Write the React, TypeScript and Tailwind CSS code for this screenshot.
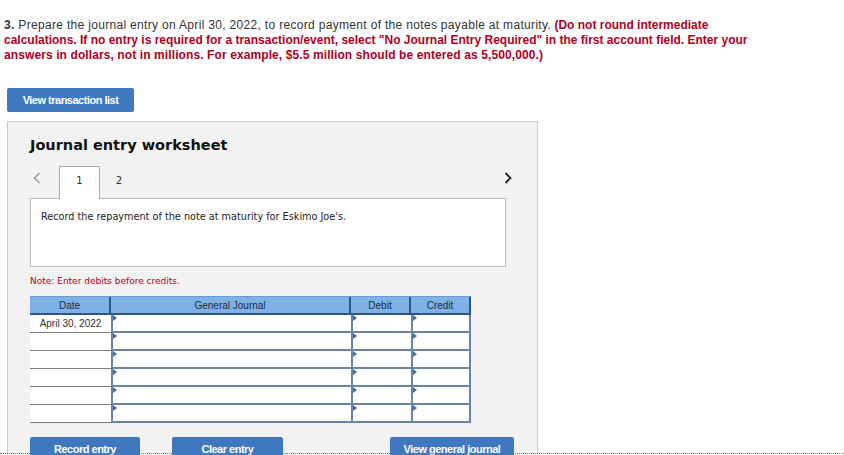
import React from 'react';

const rows = [0, 1, 2, 3, 4, 5];

const Marker: React.FC = () => (
    <span className="absolute left-0 top-0 h-0 w-0 border-y-[3px] border-l-[4px] border-y-transparent border-l-[#3d6eb5]" />
);

const Chevron: React.FC<{ dir: 'left' | 'right'; color: string }> = ({ dir, color }) => (
    <svg width="8" height="12" viewBox="0 0 8 12" fill="none">
        <path
            d={dir === 'left' ? 'M6.5 1 L1.5 6 L6.5 11' : 'M1.5 1 L6.5 6 L1.5 11'}
            stroke={color}
            strokeWidth={dir === 'left' ? 1.4 : 1.8}
        />
    </svg>
);

const App: React.FC = () => {
    return (
        <div className="relative h-[455px] w-[844px] overflow-hidden bg-white">
            <div className="whitespace-nowrap pl-[4px] pt-[18px] text-[12px] leading-[15px] text-[#333] [font-family:'Liberation_Sans',Arial,sans-serif]">
                <div>
                    <span className="tracking-[0.32px]">
                        <span className="font-bold">3.</span> Prepare the journal entry on April 30, 2022, to record payment of the notes payable at maturity.
                    </span>{' '}
                    <span className="font-bold text-[#b0001e]">(Do not round intermediate</span>
                </div>
                <div className="font-bold text-[#b0001e]">
                    calculations. If no entry is required for a transaction/event, select "No Journal Entry Required" in the first account field. Enter your
                </div>
                <div className="font-bold tracking-[0.1px] text-[#b0001e]">
                    answers in dollars, not in millions. For example, $5.5 million should be entered as 5,500,000.)
                </div>
            </div>

            <button className="ml-[7px] mt-[25px] h-[24px] w-[127px] rounded-[2px] bg-[#4078c0] text-[11px] font-bold tracking-[-0.5px] text-white [font-family:'Liberation_Sans',Arial,sans-serif]">
                View transaction list
            </button>

            <div className="ml-[7px] mt-[9px] h-[400px] w-[531px] border border-[#cccccc] bg-[#f2f2f2] pl-[22px] pt-[13px] [font-family:'DejaVu_Sans',Verdana,sans-serif]">
                <h2 className="text-[14.5px] font-bold leading-[20px] text-[#111]">Journal entry worksheet</h2>

                <div className="mt-[11px] flex h-[33px] w-[483px] items-start">
                    <span className="ml-[3px] mt-[6px] w-[26px]">
                        <Chevron dir="left" color="#999999" />
                    </span>
                    <div className="relative z-10 flex h-[33px] w-[41px] justify-center border border-b-0 border-[#aaaaaa] bg-white pt-[6px] text-[10px] text-[#333]">
                        1
                    </div>
                    <div className="flex w-[38px] justify-center pt-[7px] text-[10px] text-[#333]">2</div>
                    <span className="ml-auto mr-[1px] mt-[6px]">
                        <Chevron dir="right" color="#222222" />
                    </span>
                </div>

                <div className="-mt-px h-[69px] w-[476px] border border-[#bbbbbb] bg-white pl-[10px] pt-[11px] text-[9.7px] text-[#222]">
                    Record the repayment of the note at maturity for Eskimo Joe's.
                </div>

                <div className="mt-[8px] text-[9px] leading-[12px] text-[#b0001e]">Note: Enter debits before credits.</div>

                <div className="mt-[9px] w-[441px] [font-family:'Liberation_Sans',Arial,sans-serif]">
                    <div className="flex h-[19px] border-b-2 border-t border-[#2f5582] border-t-[#6d9bd4] bg-[#7fb1e7] text-[10px] text-[#1c2b3d]">
                        <div className="flex w-[81px] items-center justify-center border-r-2 border-[#2f5582]">Date</div>
                        <div className="flex w-[240px] items-center justify-center border-r-2 border-[#2f5582]">General Journal</div>
                        <div className="flex w-[60px] items-center justify-center border-r-2 border-[#2f5582]">Debit</div>
                        <div className="flex flex-1 items-center justify-center border-r-2 border-[#2f5582]">Credit</div>
                    </div>
                    {rows.map((r) => (
                        <div key={r} className="flex h-[18px]">
                            <div className="flex w-[81px] items-center justify-center border-b border-[#7a7a7a] bg-white text-[10px] text-[#333]">
                                {r === 0 ? 'April 30, 2022' : ''}
                            </div>
                            <div className="relative w-[240px] border-b-2 border-l-2 border-[#6a84a6] bg-white">
                                <Marker />
                            </div>
                            <div className="relative w-[60px] border-b-2 border-l-2 border-[#6a84a6] bg-white">
                                <Marker />
                            </div>
                            <div className="relative flex-1 border-b-2 border-l-2 border-r-2 border-[#6a84a6] bg-white">
                                <Marker />
                            </div>
                        </div>
                    ))}
                </div>

                <div className="mt-[14px] flex w-[484px] text-[11px] font-bold tracking-[-0.5px] text-white [font-family:'Liberation_Sans',Arial,sans-serif]">
                    <button className="h-[24px] w-[110px] rounded-[2px] bg-[#4078c0]">Record entry</button>
                    <button className="ml-[32px] h-[24px] w-[111px] rounded-[2px] bg-[#4078c0]">Clear entry</button>
                    <button className="ml-auto h-[24px] w-[124px] rounded-[2px] bg-[#4078c0]">View general journal</button>
                </div>
            </div>

            <div className="absolute left-0 top-[453px] w-full border-t border-dotted border-[#4a7dbb]" />
        </div>
    );
};

export default App;
